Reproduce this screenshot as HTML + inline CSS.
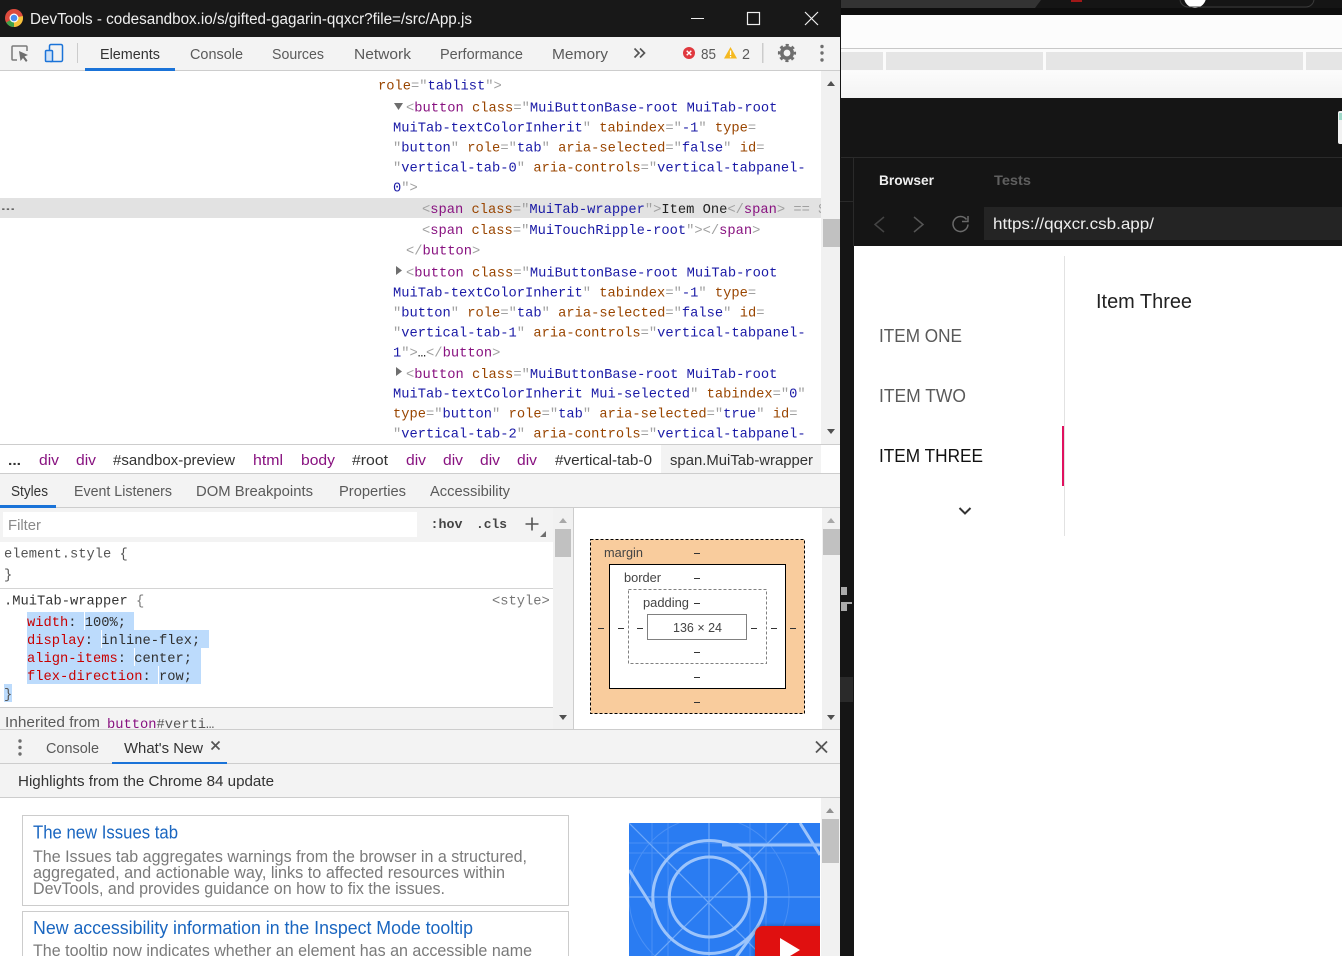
<!DOCTYPE html>
<html lang="en">
<head>
<meta charset="utf-8">
<title>DevTools</title>
<style>
html,body{margin:0;padding:0;width:1342px;height:956px;overflow:hidden;background:#fff}
svg{display:block}
text{white-space:pre}
.s{font-family:"Liberation Sans",sans-serif;font-size:14.5px;fill:#5a5a5a}
.m{font-family:"Liberation Mono",monospace;font-size:13.75px;fill:#a0a0a0}
.t{fill:#881280}.a{fill:#994500}.v{fill:#1a1aa6}.k{fill:#222}
.c{fill:#c80000}.d{fill:#303030}
.b{font-size:12.5px;fill:#444}
</style>
</head>
<body>
<svg width="1342" height="956" viewBox="0 0 1342 956" xmlns="http://www.w3.org/2000/svg">
<defs>
<clipPath id="cp"><rect x="0" y="71" width="821" height="373"/></clipPath>
<clipPath id="ci"><rect x="629" y="823" width="191" height="133"/></clipPath>
<clipPath id="cr"><rect x="0" y="708" width="553" height="21"/></clipPath>
<linearGradient id="gf" x1="0" y1="0" x2="0" y2="1"><stop offset="0" stop-color="#fcfcfc"/><stop offset="1" stop-color="#f3f3f3"/></linearGradient>
<filter id="sh" x="-20%" y="-20%" width="140%" height="140%"><feGaussianBlur stdDeviation="2"/></filter>
</defs>

<!-- RIGHT SIDE -->
<rect x="840" y="0" width="502" height="956" fill="#151515"/>
<path d="M841 0h200l-6 8H841z" fill="#333"/>
<rect x="1071" y="0" width="11" height="2" fill="#a01818"/>
<rect x="841" y="8" width="501" height="7" fill="#0e0e0e"/>
<circle cx="1195" cy="-3" r="11" fill="#fff"/>
<rect x="1180" y="-10" width="134" height="17" rx="8" fill="none" stroke="#3a3a3a"/>
<rect x="841" y="15" width="501" height="33" fill="#fcfcfc"/>
<rect x="841" y="48" width="501" height="1" fill="#c8c8c8"/>
<rect x="841" y="49" width="501" height="3" fill="#fbfbfb"/>
<rect x="841" y="52" width="501" height="19" fill="#fbfbfb"/>
<rect x="841" y="52" width="42" height="18" fill="#e5e5e5"/>
<rect x="886" y="52" width="157" height="18" fill="#e5e5e5"/>
<rect x="1046" y="52" width="257" height="18" fill="#e5e5e5"/>
<rect x="1306" y="52" width="36" height="18" fill="#e5e5e5"/>
<rect x="841" y="71" width="501" height="27" fill="url(#gf)"/>
<rect x="1338" y="111" width="6" height="33" rx="2" fill="#f2f2f2"/>
<rect x="1339" y="113" width="3" height="7" fill="#9fd8c8"/>
<rect x="841" y="157" width="501" height="1" fill="#2a2a2a"/>
<rect x="853" y="158" width="1" height="88" fill="#2a2a2a"/>
<rect x="840" y="201" width="13" height="1" fill="#2a2a2a"/>
<text x="879" y="185" textLength="55" lengthAdjust="spacingAndGlyphs" font-family="Liberation Sans" font-weight="700" font-size="14" fill="#eee">Browser</text>
<text x="994" y="185" textLength="37" lengthAdjust="spacingAndGlyphs" font-family="Liberation Sans" font-weight="700" font-size="14" fill="#5f5f5f">Tests</text>
<path d="M884 217l-9 7.500 9 7.500" fill="none" stroke="#444" stroke-width="1.500"/>
<path d="M914 217l9 7.500-9 7.500" fill="none" stroke="#555" stroke-width="1.500"/>
<path d="M966.500 219.500a7.500 7.500 0 1 0 1.500 5M968 216v5.500h-6" fill="none" stroke="#6a6a6a" stroke-width="1.500"/>
<rect x="984" y="207" width="358" height="33" fill="#242424"/>
<text x="993" y="229" textLength="161" lengthAdjust="spacingAndGlyphs" font-family="Liberation Sans" font-size="16" fill="#eee">https://qqxcr.csb.app/</text>
<rect x="854" y="246" width="488" height="710" fill="#fff"/>
<text x="879" y="342" textLength="83" lengthAdjust="spacingAndGlyphs" font-family="Liberation Sans" font-size="18" fill="#595959">ITEM ONE</text>
<text x="879" y="402" textLength="87" lengthAdjust="spacingAndGlyphs" font-family="Liberation Sans" font-size="18" fill="#595959">ITEM TWO</text>
<text x="879" y="462" textLength="104" lengthAdjust="spacingAndGlyphs" font-family="Liberation Sans" font-size="18" fill="#111">ITEM THREE</text>
<path d="M959.500 508l5.500 5.500 5.500-5.500" fill="none" stroke="#333" stroke-width="2"/>
<rect x="1064" y="256" width="1" height="280" fill="#e2e2e2"/>
<rect x="1062" y="426" width="2" height="60" fill="#e0115f"/>
<text x="1096" y="308" textLength="96" lengthAdjust="spacingAndGlyphs" font-family="Liberation Sans" font-size="20" fill="#222">Item Three</text>
<rect x="841" y="587" width="6" height="8" fill="#aaa"/>
<rect x="841" y="602" width="11" height="2" fill="#aaa"/>
<rect x="841" y="604" width="6" height="7" fill="#aaa"/>
<rect x="840" y="677" width="13" height="25" fill="#2a2a2a"/>

<!-- LEFT: base -->
<rect x="0" y="0" width="840" height="956" fill="#fff"/>

<!-- Title bar -->
<rect x="0" y="0" width="840" height="37" fill="#181818"/>
<circle cx="14" cy="18" r="9" fill="#dd4b3e"/>
<path d="M14 18L6.200 22.500A9 9 0 0 0 14 27z" fill="#3fa14a"/>
<path d="M14 18L14 27A9 9 0 0 0 22.800 16z" fill="#f5c33b"/>
<circle cx="14" cy="18" r="4.500" fill="#fff"/>
<circle cx="14" cy="18" r="3.300" fill="#4a8cf0"/>
<text x="30" y="24" textLength="442" lengthAdjust="spacingAndGlyphs" font-family="Liberation Sans" font-size="15.500" fill="#efefef">DevTools - codesandbox.io/s/gifted-gagarin-qqxcr?file=/src/App.js</text>
<rect x="691" y="18" width="13" height="1" fill="#eee"/>
<rect x="747.500" y="12.500" width="12" height="12" fill="none" stroke="#eee" stroke-width="1.200"/>
<path d="M805 12l13 13M818 12l-13 13" stroke="#eee" stroke-width="1.200" fill="none"/>

<!-- Toolbar -->
<rect x="0" y="37" width="840" height="33" fill="#f3f3f3"/>
<rect x="0" y="70" width="840" height="1" fill="#cdcdcd"/>
<rect x="85" y="68" width="90" height="3" fill="#1a73d8"/>
<path d="M17 60h-4a1 1 0 0 1-1-1V47a1 1 0 0 1 1-1h13a1 1 0 0 1 1 1v4" fill="none" stroke="#7a7a7a" stroke-width="1.500"/>
<path d="M19 51l9 4-3.500 1.500 3 4-1.500 1.500-3-4-2.500 3z" fill="#6e6e6e"/>
<rect x="49.500" y="44.500" width="13" height="17" rx="1.500" fill="none" stroke="#1a73d8" stroke-width="1.500"/>
<rect x="45.500" y="50.500" width="7" height="11" rx="1" fill="#cfe2f8" stroke="#1a73d8" stroke-width="1.500"/>
<rect x="77" y="43" width="1" height="20" fill="#ccc"/>
<text class="s" x="100" y="59" textLength="60" lengthAdjust="spacingAndGlyphs" style="fill:#333">Elements</text>
<text class="s" x="190" y="59" textLength="53" lengthAdjust="spacingAndGlyphs">Console</text>
<text class="s" x="272" y="59" textLength="52" lengthAdjust="spacingAndGlyphs">Sources</text>
<text class="s" x="354" y="59" textLength="57" lengthAdjust="spacingAndGlyphs">Network</text>
<text class="s" x="440" y="59" textLength="83" lengthAdjust="spacingAndGlyphs">Performance</text>
<text class="s" x="552" y="59" textLength="56" lengthAdjust="spacingAndGlyphs">Memory</text>
<path d="M634.500 48.500l4.500 4.500-4.500 4.500M640 48.500l4.500 4.500-4.500 4.500" fill="none" stroke="#555" stroke-width="1.700"/>
<circle cx="689" cy="53" r="6" fill="#e0383e"/>
<path d="M686.700 50.700l4.600 4.600M691.300 50.700l-4.600 4.600" stroke="#fff" stroke-width="1.400"/>
<text class="s" x="701" y="59" textLength="15" lengthAdjust="spacingAndGlyphs">85</text>
<path d="M730.500 47l6.500 11.500h-13z" fill="#f5b921"/>
<rect x="729.900" y="50.500" width="1.300" height="4.500" fill="#fff"/>
<rect x="729.900" y="56" width="1.300" height="1.400" fill="#fff"/>
<text class="s" x="742" y="59" textLength="8" lengthAdjust="spacingAndGlyphs">2</text>
<rect x="762" y="43" width="1.500" height="20" fill="#ccc"/>
<circle cx="787" cy="53" r="5.200" fill="none" stroke="#6e6e6e" stroke-width="3.600"/>
<circle cx="787" cy="53" r="8" fill="none" stroke="#6e6e6e" stroke-width="2.200" stroke-dasharray="3.200 3.080" stroke-dashoffset="1.600"/>
<circle cx="822" cy="46.500" r="1.700" fill="#6e6e6e"/><circle cx="822" cy="53" r="1.700" fill="#6e6e6e"/><circle cx="822" cy="60" r="1.700" fill="#6e6e6e"/>

<!-- DOM panel -->
<rect x="0" y="198" width="821" height="20" fill="#e2e2e2"/>
<text x="1" y="210" font-family="Liberation Sans" font-weight="700" font-size="11" fill="#666" textLength="14" lengthAdjust="spacingAndGlyphs">...</text>
<g clip-path="url(#cp)">
<text class="m" x="378" y="89.500"><tspan class="a">role</tspan>="<tspan class="v">tablist</tspan>"&gt;</text>
<text class="m" x="406" y="111.500">&lt;<tspan class="t">button</tspan> <tspan class="a">class</tspan>="<tspan class="v">MuiButtonBase-root MuiTab-root</tspan></text>
<text class="m" x="393" y="131.500"><tspan class="v">MuiTab-textColorInherit</tspan>" <tspan class="a">tabindex</tspan>="<tspan class="v">-1</tspan>" <tspan class="a">type</tspan>=</text>
<text class="m" x="393" y="151.500">"<tspan class="v">button</tspan>" <tspan class="a">role</tspan>="<tspan class="v">tab</tspan>" <tspan class="a">aria-selected</tspan>="<tspan class="v">false</tspan>" <tspan class="a">id</tspan>=</text>
<text class="m" x="393" y="171.500">"<tspan class="v">vertical-tab-0</tspan>" <tspan class="a">aria-controls</tspan>="<tspan class="v">vertical-tabpanel-</tspan></text>
<text class="m" x="393" y="191.500"><tspan class="v">0</tspan>"&gt;</text>
<text class="m" x="422" y="213">&lt;<tspan class="t">span</tspan> <tspan class="a">class</tspan>="<tspan class="v">MuiTab-wrapper</tspan>"&gt;<tspan class="k">Item One</tspan>&lt;/<tspan class="t">span</tspan>&gt; == $0</text>
<text class="m" x="422" y="234">&lt;<tspan class="t">span</tspan> <tspan class="a">class</tspan>="<tspan class="v">MuiTouchRipple-root</tspan>"&gt;&lt;/<tspan class="t">span</tspan>&gt;</text>
<text class="m" x="406" y="254.500">&lt;/<tspan class="t">button</tspan>&gt;</text>
<text class="m" x="406" y="276.500">&lt;<tspan class="t">button</tspan> <tspan class="a">class</tspan>="<tspan class="v">MuiButtonBase-root MuiTab-root</tspan></text>
<text class="m" x="393" y="296.500"><tspan class="v">MuiTab-textColorInherit</tspan>" <tspan class="a">tabindex</tspan>="<tspan class="v">-1</tspan>" <tspan class="a">type</tspan>=</text>
<text class="m" x="393" y="316.500">"<tspan class="v">button</tspan>" <tspan class="a">role</tspan>="<tspan class="v">tab</tspan>" <tspan class="a">aria-selected</tspan>="<tspan class="v">false</tspan>" <tspan class="a">id</tspan>=</text>
<text class="m" x="393" y="336.500">"<tspan class="v">vertical-tab-1</tspan>" <tspan class="a">aria-controls</tspan>="<tspan class="v">vertical-tabpanel-</tspan></text>
<text class="m" x="393" y="356.500"><tspan class="v">1</tspan>"&gt;<tspan class="k">…</tspan>&lt;/<tspan class="t">button</tspan>&gt;</text>
<text class="m" x="406" y="378">&lt;<tspan class="t">button</tspan> <tspan class="a">class</tspan>="<tspan class="v">MuiButtonBase-root MuiTab-root</tspan></text>
<text class="m" x="393" y="397.500"><tspan class="v">MuiTab-textColorInherit Mui-selected</tspan>" <tspan class="a">tabindex</tspan>="<tspan class="v">0</tspan>"</text>
<text class="m" x="393" y="417.500"><tspan class="a">type</tspan>="<tspan class="v">button</tspan>" <tspan class="a">role</tspan>="<tspan class="v">tab</tspan>" <tspan class="a">aria-selected</tspan>="<tspan class="v">true</tspan>" <tspan class="a">id</tspan>=</text>
<text class="m" x="393" y="437.500">"<tspan class="v">vertical-tab-2</tspan>" <tspan class="a">aria-controls</tspan>="<tspan class="v">vertical-tabpanel-</tspan></text>
</g>
<path d="M394 103h9l-4.500 7z" fill="#6e6e6e"/>
<path d="M396 266v9l6-4.500z" fill="#6e6e6e"/>
<path d="M396 367v9l6-4.500z" fill="#6e6e6e"/>
<rect x="821" y="71" width="19" height="373" fill="#f1f1f1"/>
<rect x="823" y="219" width="17" height="28" fill="#c1c1c1"/>
<path d="M827 86l4-5 4 5z" fill="#505050"/>
<path d="M827 429l4 5 4-5z" fill="#505050"/>

<!-- Breadcrumbs -->
<rect x="0" y="444" width="840" height="1" fill="#cdcdcd"/>
<rect x="661" y="445" width="160" height="28" fill="#f3f3f3"/>
<rect x="821" y="445" width="19" height="28" fill="#fff"/>
<rect x="0" y="473" width="840" height="1" fill="#cdcdcd"/>
<text x="8" y="465" font-family="Liberation Sans" font-weight="700" font-size="14" fill="#333" textLength="13" lengthAdjust="spacingAndGlyphs">...</text>
<text class="s" x="39" y="465" textLength="20" lengthAdjust="spacingAndGlyphs" style="fill:#881280">div</text>
<text class="s" x="76" y="465" textLength="20" lengthAdjust="spacingAndGlyphs" style="fill:#881280">div</text>
<text class="s" x="113" y="465" textLength="122" lengthAdjust="spacingAndGlyphs" style="fill:#333">#sandbox-preview</text>
<text class="s" x="253" y="465" textLength="30" lengthAdjust="spacingAndGlyphs" style="fill:#881280">html</text>
<text class="s" x="301" y="465" textLength="34" lengthAdjust="spacingAndGlyphs" style="fill:#881280">body</text>
<text class="s" x="352" y="465" textLength="36" lengthAdjust="spacingAndGlyphs" style="fill:#333">#root</text>
<text class="s" x="406" y="465" textLength="20" lengthAdjust="spacingAndGlyphs" style="fill:#881280">div</text>
<text class="s" x="443" y="465" textLength="20" lengthAdjust="spacingAndGlyphs" style="fill:#881280">div</text>
<text class="s" x="480" y="465" textLength="20" lengthAdjust="spacingAndGlyphs" style="fill:#881280">div</text>
<text class="s" x="517" y="465" textLength="20" lengthAdjust="spacingAndGlyphs" style="fill:#881280">div</text>
<text class="s" x="555" y="465" textLength="97" lengthAdjust="spacingAndGlyphs" style="fill:#333">#vertical-tab-0</text>
<text class="s" x="670" y="465" textLength="143" lengthAdjust="spacingAndGlyphs" style="fill:#333">span.MuiTab-wrapper</text>

<!-- Sidebar tabs + filter -->
<rect x="0" y="474" width="840" height="33" fill="#f3f3f3"/>
<rect x="0" y="507" width="840" height="1" fill="#cdcdcd"/>
<rect x="0" y="505" width="56" height="3" fill="#1a73d8"/>
<text class="s" x="11" y="496" textLength="37" lengthAdjust="spacingAndGlyphs" style="fill:#333">Styles</text>
<text class="s" x="74" y="496" textLength="98" lengthAdjust="spacingAndGlyphs">Event Listeners</text>
<text class="s" x="196" y="496" textLength="117" lengthAdjust="spacingAndGlyphs">DOM Breakpoints</text>
<text class="s" x="339" y="496" textLength="67" lengthAdjust="spacingAndGlyphs">Properties</text>
<text class="s" x="430" y="496" textLength="80" lengthAdjust="spacingAndGlyphs">Accessibility</text>

<rect x="0" y="508" width="553" height="34" fill="#f3f3f3"/>
<rect x="3" y="512" width="414" height="25" fill="#fff"/>
<text class="s" x="8" y="530" textLength="33" lengthAdjust="spacingAndGlyphs" style="fill:#8a8a8a">Filter</text>
<text x="430.500" y="528" font-family="Liberation Mono" font-weight="700" font-size="13" fill="#444" textLength="32" lengthAdjust="spacingAndGlyphs">:hov</text>
<text x="476" y="528" font-family="Liberation Mono" font-weight="700" font-size="13" fill="#444" textLength="31" lengthAdjust="spacingAndGlyphs">.cls</text>
<path d="M532 517.500v13M525.500 524h13" stroke="#555" stroke-width="1.600"/>
<path d="M546 531v6h-6z" fill="#6e6e6e"/>

<!-- Styles pane -->
<rect x="0" y="542" width="553" height="165" fill="#fff"/>
<text class="m" x="4" y="557.500" style="fill:#555">element.style {</text>
<text class="m" x="4" y="578.500" style="fill:#555">}</text>
<rect x="0" y="588" width="553" height="1" fill="#d4d4d4"/>
<text class="m" x="4" y="604.500" style="fill:#333">.MuiTab-wrapper <tspan style="fill:#777">{</tspan></text>
<text class="m" x="492" y="604.500" style="fill:#777">&lt;style&gt;</text>
<rect x="27" y="612" width="107" height="18" fill="#bcdbfc"/>
<rect x="27" y="630" width="182" height="18" fill="#bcdbfc"/>
<rect x="27" y="648" width="174" height="18" fill="#bcdbfc"/>
<rect x="27" y="666" width="174" height="18" fill="#bcdbfc"/>
<rect x="4" y="684" width="8" height="18" fill="#bcdbfc"/>
<rect x="84" y="612" width="1" height="18" fill="#fff"/>
<rect x="101" y="630" width="1" height="18" fill="#fff"/>
<rect x="134" y="648" width="1" height="18" fill="#fff"/>
<rect x="158" y="666" width="1" height="18" fill="#fff"/>
<text class="m" x="27" y="626"><tspan class="c">width</tspan><tspan class="d">: 100%;</tspan></text>
<text class="m" x="27" y="644"><tspan class="c">display</tspan><tspan class="d">: inline-flex;</tspan></text>
<text class="m" x="27" y="662"><tspan class="c">align-items</tspan><tspan class="d">: center;</tspan></text>
<text class="m" x="27" y="680"><tspan class="c">flex-direction</tspan><tspan class="d">: row;</tspan></text>
<text class="m" x="4" y="698" style="fill:#555">}</text>
<rect x="0" y="707" width="553" height="1" fill="#cdcdcd"/>
<rect x="0" y="708" width="553" height="21" fill="#f3f3f3"/>
<g clip-path="url(#cr)">
<text class="s" x="5" y="727" textLength="95" lengthAdjust="spacingAndGlyphs">Inherited from</text>
<text class="m" x="107" y="728"><tspan class="t">button</tspan><tspan style="fill:#555">#verti…</tspan></text>
</g>
<rect x="553" y="508" width="20" height="221" fill="#f1f1f1"/>
<rect x="555" y="529" width="16" height="28" fill="#c1c1c1"/>
<path d="M559 523l4-5 4 5z" fill="#a8a8a8"/>
<path d="M559 715l4 5 4-5z" fill="#505050"/>
<rect x="573" y="508" width="1" height="221" fill="#cdcdcd"/>

<!-- Box model -->
<rect x="574" y="508" width="248" height="221" fill="#fff"/>
<rect x="590.500" y="539.500" width="214" height="174" fill="#f9cc9d" stroke="#000" stroke-dasharray="3 2"/>
<rect x="609.500" y="564.500" width="176" height="124" fill="#fff" stroke="#000"/>
<rect x="628.500" y="589.500" width="138" height="74" fill="#fff" stroke="#808080" stroke-dasharray="3 2"/>
<rect x="647.500" y="614.500" width="99" height="25" fill="#fff" stroke="#808080"/>
<text class="s b" x="604" y="557" textLength="39" lengthAdjust="spacingAndGlyphs">margin</text>
<text class="s b" x="624" y="582" textLength="37" lengthAdjust="spacingAndGlyphs">border</text>
<text class="s b" x="643" y="607" textLength="46" lengthAdjust="spacingAndGlyphs">padding</text>
<text class="s b" x="673" y="632" textLength="49" lengthAdjust="spacingAndGlyphs">136 × 24</text>
<g fill="#333">
<rect x="694" y="553" width="6" height="1"/><rect x="694" y="578" width="6" height="1"/><rect x="694" y="603" width="6" height="1"/>
<rect x="694" y="652" width="6" height="1"/><rect x="694" y="677" width="6" height="1"/><rect x="694" y="702" width="6" height="1"/>
<rect x="598" y="628" width="6" height="1"/><rect x="618" y="628" width="6" height="1"/><rect x="637" y="628" width="6" height="1"/>
<rect x="751" y="628" width="6" height="1"/><rect x="771" y="628" width="6" height="1"/><rect x="790" y="628" width="6" height="1"/>
</g>
<rect x="822" y="508" width="18" height="221" fill="#f1f1f1"/>
<rect x="823" y="529" width="17" height="26" fill="#c1c1c1"/>
<path d="M827 523l4-5 4 5z" fill="#a8a8a8"/>
<path d="M827 715l4 5 4-5z" fill="#505050"/>

<!-- Drawer -->
<rect x="0" y="729" width="840" height="1" fill="#cdcdcd"/>
<rect x="0" y="730" width="840" height="33" fill="#f3f3f3"/>
<rect x="0" y="763" width="840" height="1" fill="#cdcdcd"/>
<rect x="112" y="762" width="115" height="2" fill="#1a73d8"/>
<circle cx="20" cy="741" r="1.700" fill="#6e6e6e"/><circle cx="20" cy="747.500" r="1.700" fill="#6e6e6e"/><circle cx="20" cy="754" r="1.700" fill="#6e6e6e"/>
<text class="s" x="46" y="753" textLength="53" lengthAdjust="spacingAndGlyphs">Console</text>
<text class="s" x="124" y="753" textLength="79" lengthAdjust="spacingAndGlyphs" style="fill:#333">What's New</text>
<path d="M211.500 741.500l8 8M219.500 741.500l-8 8" stroke="#555" stroke-width="1.700"/>
<path d="M816 741.500l11 11M827 741.500l-11 11" stroke="#555" stroke-width="1.800"/>
<rect x="0" y="764" width="840" height="33" fill="#f3f3f3"/>
<rect x="0" y="797" width="840" height="1" fill="#cdcdcd"/>
<text class="s" x="18" y="786" textLength="256" lengthAdjust="spacingAndGlyphs" style="fill:#333">Highlights from the Chrome 84 update</text>

<!-- What's new content -->
<rect x="22.500" y="815.500" width="546" height="90" fill="#fff" stroke="#ccc"/>
<text x="33" y="838.500" font-family="Liberation Sans" font-size="18" fill="#1a66c0" textLength="145" lengthAdjust="spacingAndGlyphs">The new Issues tab</text>
<text class="s" x="33" y="862" textLength="494" lengthAdjust="spacingAndGlyphs" style="font-size:16.500px;fill:#7a7a7a">The Issues tab aggregates warnings from the browser in a structured,</text>
<text class="s" x="33" y="878" textLength="472" lengthAdjust="spacingAndGlyphs" style="font-size:16.500px;fill:#7a7a7a">aggregated, and actionable way, links to affected resources within</text>
<text class="s" x="33" y="894" textLength="412" lengthAdjust="spacingAndGlyphs" style="font-size:16.500px;fill:#7a7a7a">DevTools, and provides guidance on how to fix the issues.</text>
<rect x="22.500" y="911.500" width="546" height="60" fill="#fff" stroke="#ccc"/>
<text x="33" y="934" font-family="Liberation Sans" font-size="18" fill="#1a66c0" textLength="440" lengthAdjust="spacingAndGlyphs">New accessibility information in the Inspect Mode tooltip</text>
<text class="s" x="33" y="956" textLength="499" lengthAdjust="spacingAndGlyphs" style="font-size:16.500px;fill:#7a7a7a">The tooltip now indicates whether an element has an accessible name</text>

<!-- Video thumbnail -->
<rect x="629" y="823" width="191" height="133" fill="#2a7cf2"/>
<g clip-path="url(#ci)" fill="none">
<g stroke="#4a90f5" stroke-width="1">
<path d="M629 843h191M629 853h191M652 823v133M668 823v133M750 823v133M766 823v133"/>
<circle cx="709" cy="897" r="80"/>
</g>
<g stroke="#6ea8f8" stroke-width="1.200">
<path d="M629 897h191M709 823v133M629 823l134 134M788 823L645 966"/>
</g>
<g stroke="#9cc4fb" stroke-width="3">
<circle cx="709.300" cy="897" r="56.500"/>
<circle cx="709.300" cy="897" r="40"/>
<path d="M722 845h98M800 823l20 32M629 870l24 38M756 930l-22 30"/>
</g>
<rect x="755" y="926" width="75" height="50" rx="8" fill="#000" opacity=".35" filter="url(#sh)"/>
<rect x="755" y="926" width="75" height="50" rx="8" fill="#e01010"/>
<path d="M780 938l20 12-20 12z" fill="#fff"/>
</g>
<rect x="821" y="798" width="19" height="158" fill="#f1f1f1"/>
<rect x="822" y="819" width="17" height="44" fill="#c1c1c1"/>
<path d="M826 813l4-5 4 5z" fill="#909090"/>
</svg>
</body>
</html>
